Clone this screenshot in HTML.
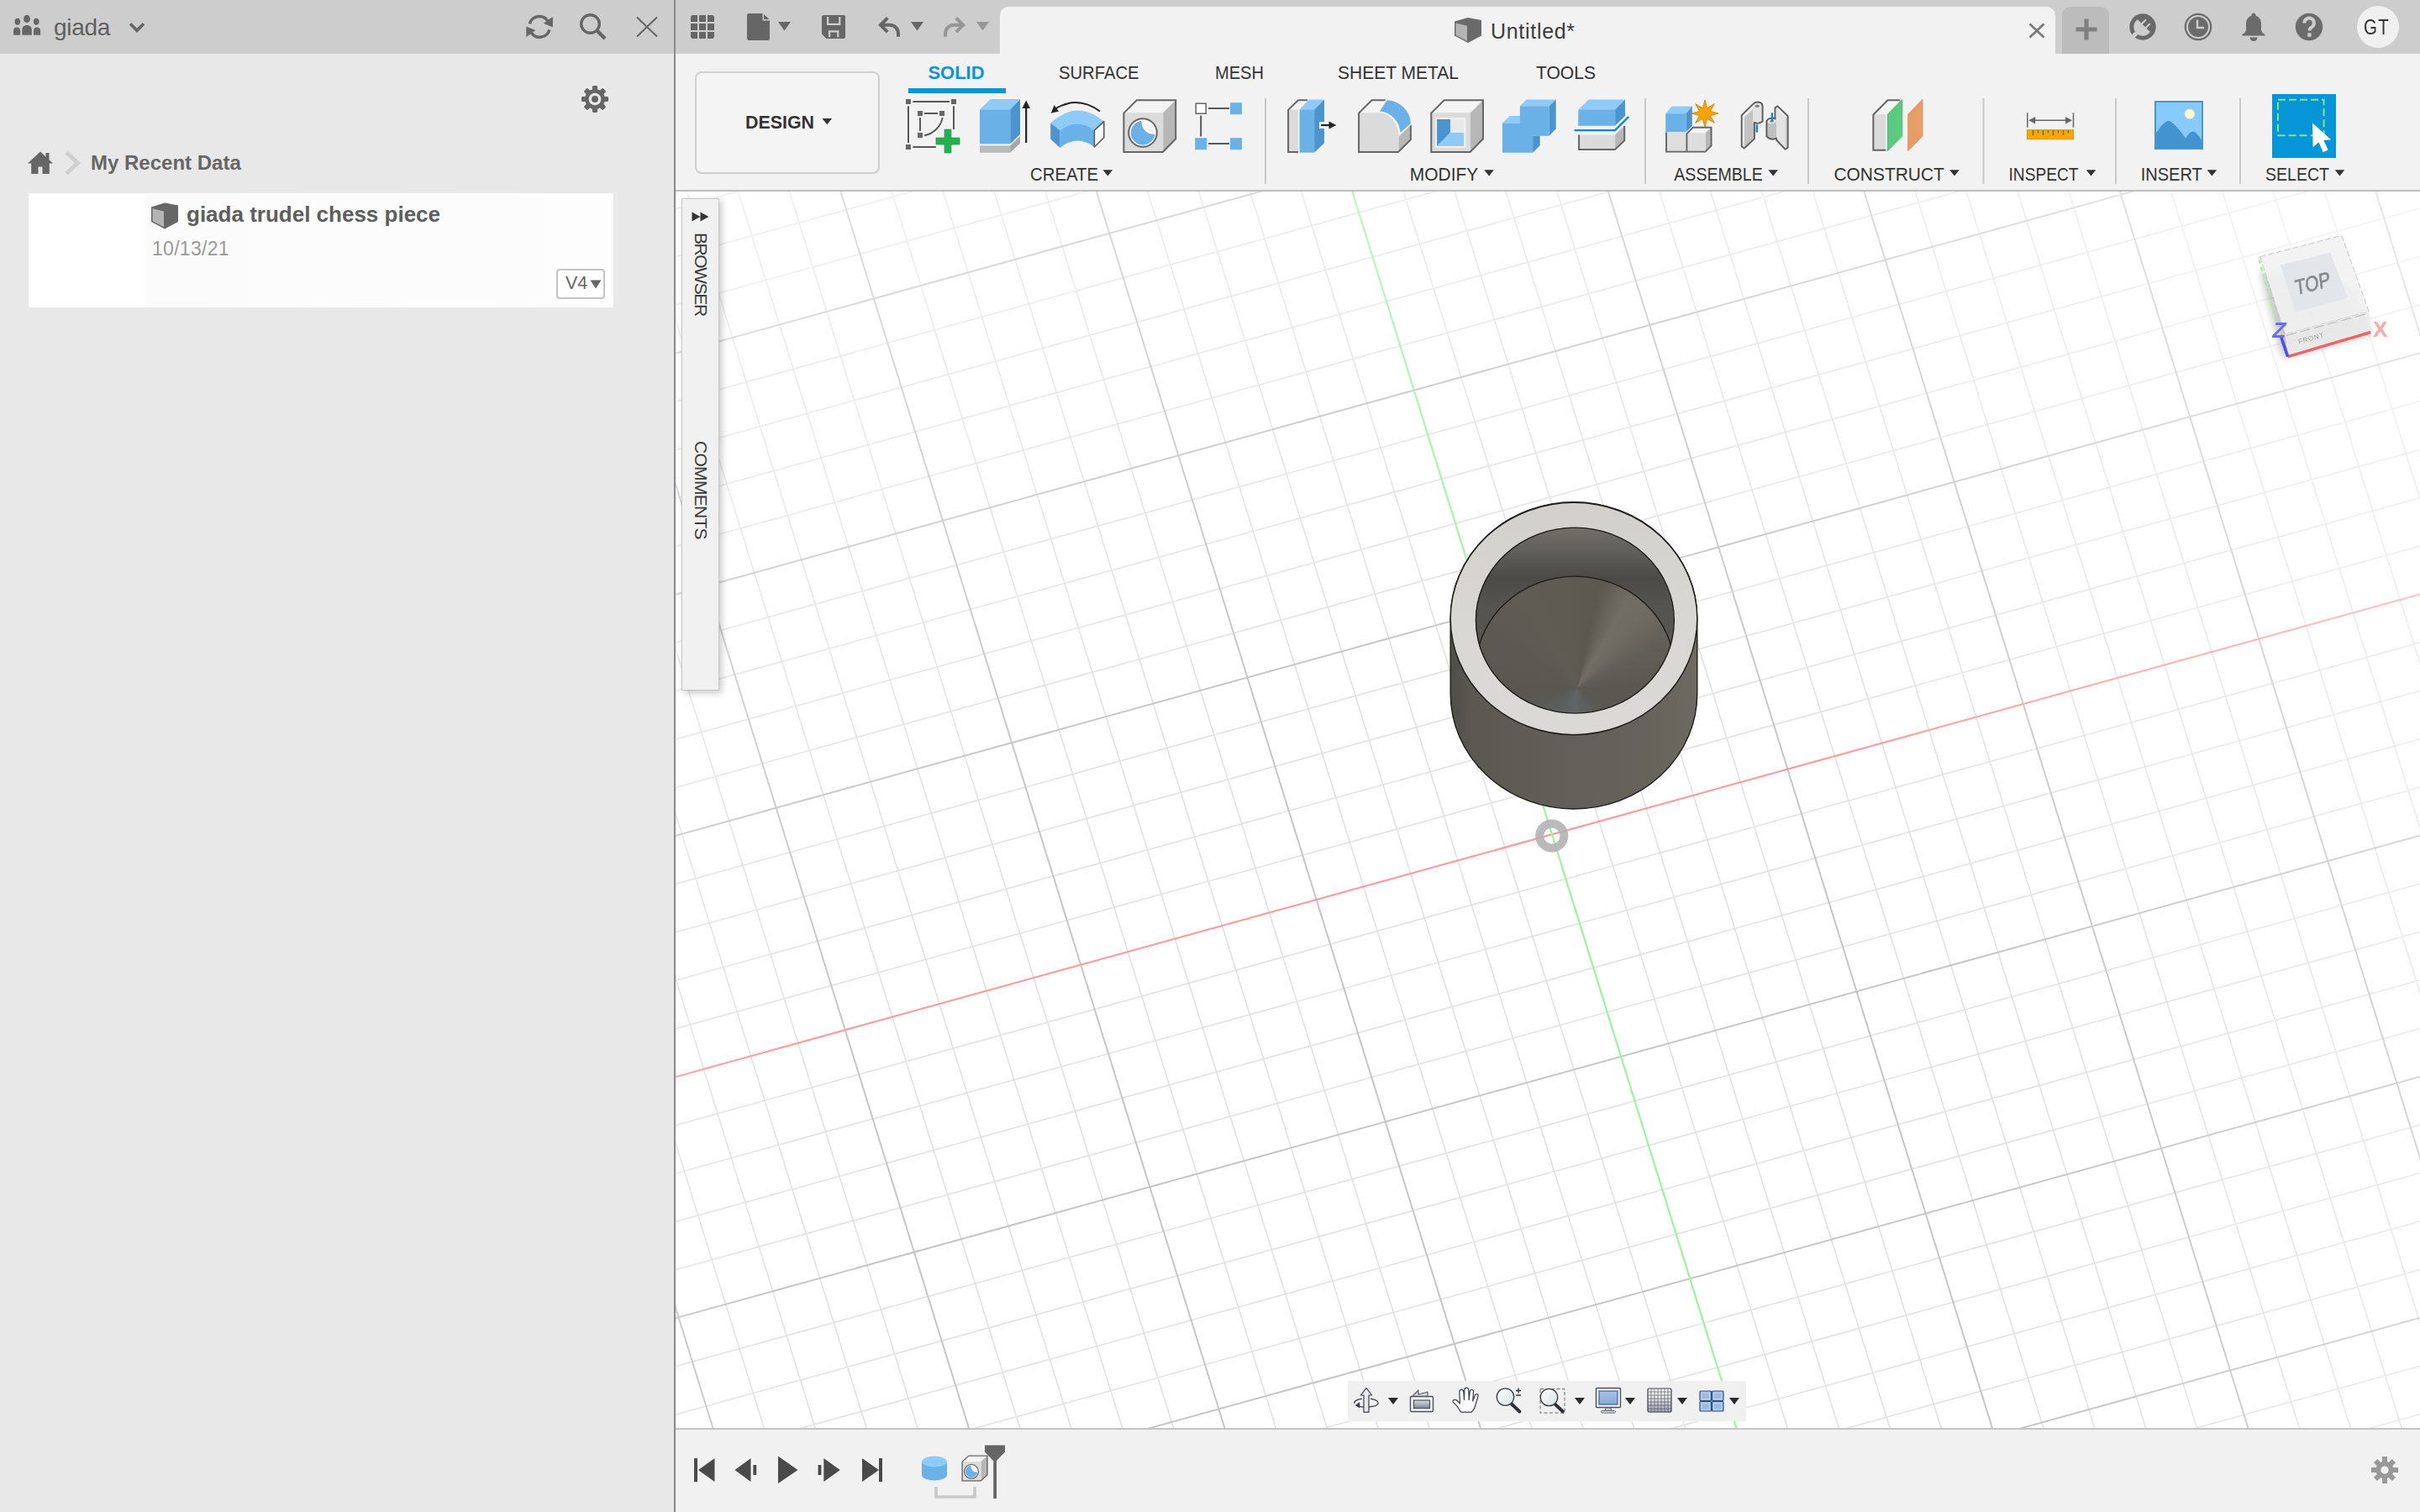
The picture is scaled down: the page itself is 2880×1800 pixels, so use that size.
<!DOCTYPE html>
<html lang="en"><head><meta charset="utf-8"><title>Fusion 360</title>
<style>
html,body{margin:0;padding:0;}
body{width:2880px;height:1800px;overflow:hidden;background:#e8e8e8;font-family:"Liberation Sans",sans-serif;position:relative;color:#333;}
.abs{position:absolute;}
svg{position:absolute;overflow:visible;}
#left{position:absolute;left:0;top:0;width:802px;height:1800px;background:#e8e8e8;}
#lefthead{position:absolute;left:0;top:0;width:802px;height:64px;background:#cdcdcd;}
#sep{position:absolute;left:802px;top:0;width:2px;height:1800px;background:#8a8a8a;}
#topbar{position:absolute;left:804px;top:0;width:2076px;height:64px;background:#cdcdcd;}
#toolbar{position:absolute;left:804px;top:64px;width:2076px;height:162px;background:#f2f2f2;border-bottom:2px solid #bebebe;}
#canvas{position:absolute;left:804px;top:228px;width:2076px;height:1472px;background:#fff;overflow:hidden;}
#bottom{position:absolute;left:804px;top:1700px;width:2076px;height:100px;background:#f1f1f1;border-top:2px solid #c3c3c3;box-sizing:border-box;}
.t{position:absolute;white-space:nowrap;line-height:1;}
</style></head><body>
<div id="left"><div id="lefthead"></div>
<!-- people icon -->
<svg style="left:15px;top:18px" width="34" height="26" viewBox="0 0 34 26"><g fill="#666">
<ellipse cx="17" cy="4.400" rx="3.950" ry="4.600"/><path d="M11.300 23.700V17.600c0-3.400 2.300-5.500 5.700-5.500s5.800 2.100 5.800 5.500v6.100z"/>
<ellipse cx="5.800" cy="7.800" rx="3.300" ry="3.950"/><path d="M1 23.700v-5.200c0-2.500 1.700-4 4-4s4.100 1.500 4.100 4v5.200z"/>
<ellipse cx="28.200" cy="7.800" rx="3.300" ry="3.950"/><path d="M25 23.700v-5.200c0-2.500 1.700-4 4-4s4.100 1.500 4.100 4v5.200z"/>
</g></svg>
<div class="t" style="left:64px;top:18.5px;font-size:28px;color:#606060;letter-spacing:-0.3px">giada</div>
<svg style="left:153px;top:26px" width="20" height="14" viewBox="0 0 20 14"><path d="M2 2.200L10 10.400L18 2.200" fill="none" stroke="#666" stroke-width="3.700"/></svg>
<!-- refresh -->
<svg style="left:624px;top:16px" width="36" height="32" viewBox="0 0 36 32"><g fill="none" stroke="#666" stroke-width="3.500">
<path d="M6.300 12.400A12 12 0 0 1 27.800 8.900"/><path d="M29.900 19.400A12 12 0 0 1 8.400 22.900"/></g>
<path d="M33.900 3.900V16.400L22.800 11.800z" fill="#666"/><path d="M2.300 27.900V15.400L13.400 20z" fill="#666"/></svg>
<!-- search -->
<svg style="left:688px;top:14px" width="36" height="36" viewBox="0 0 36 36"><circle cx="14.500" cy="14.500" r="10.800" fill="none" stroke="#666" stroke-width="3.400"/><path d="M22.500 22.500L32 32" stroke="#666" stroke-width="4.400" stroke-linecap="butt"/></svg>
<!-- close -->
<svg style="left:756px;top:19px" width="28" height="26" viewBox="0 0 28 26"><path d="M2 1.500L26 24.500M26 1.500L2 24.500" stroke="#666" stroke-width="2.100" fill="none"/></svg>
<!-- gear -->
<svg style="left:691px;top:101px" width="34" height="34" viewBox="-17 -17 34 34"><g fill="#666">
<path d="M0 -12A12 12 0 1 0 0.010 -12ZM0 -7.300A7.300 7.300 0 1 1 -0.010 -7.300Z" fill-rule="evenodd"/>
<circle r="4"/>
<g><rect x="-3.100" y="-16" width="6.200" height="6" rx="1.400"/><rect x="-3.100" y="10" width="6.200" height="6" rx="1.400"/><rect x="-16" y="-3.100" width="6" height="6.200" rx="1.400"/><rect x="10" y="-3.100" width="6" height="6.200" rx="1.400"/></g>
<g transform="rotate(45)"><rect x="-3.100" y="-16" width="6.200" height="6" rx="1.400"/><rect x="-3.100" y="10" width="6.200" height="6" rx="1.400"/><rect x="-16" y="-3.100" width="6" height="6.200" rx="1.400"/><rect x="10" y="-3.100" width="6" height="6.200" rx="1.400"/></g>
</g></svg>
<!-- breadcrumb -->
<svg style="left:32px;top:179px" width="32" height="30" viewBox="0 0 32 30"><g fill="#666"><path d="M16 1.500L1 15.500h4.200v12.500h8.300v-8.500h5v8.500h8.300v-12.500h4.200z"/><rect x="22.500" y="3" width="4" height="8"/></g></svg>
<svg style="left:76px;top:179px" width="22" height="30" viewBox="0 0 22 30"><path d="M3 2.500L16.500 15L3 27.500" fill="none" stroke="#cfcfcf" stroke-width="5"/></svg>
<div class="t" style="left:108px;top:181.5px;font-size:24px;font-weight:bold;color:#666">My Recent Data</div>
<!-- card -->
<div class="abs" style="left:34px;top:230px;width:696px;height:136px;background:linear-gradient(90deg,#fff 0,#fff 136px,#fbfbfb 140px,#fdfdfd 100%);border-radius:3px"></div>
<svg style="left:179px;top:240px" width="34" height="34" viewBox="0 0 34 34"><path d="M1 6.500L17 1.500L33 4.500V24L17 32.500L1 24Z" fill="#666"/><path d="M2.500 8.200L16 11.500V30.200L2.500 23.200Z" fill="#b4b4b4"/></svg>
<div class="t" style="left:222px;top:241.5px;font-size:26px;font-weight:bold;color:#5e5e5e">giada trudel chess piece</div>
<div class="t" style="left:181px;top:285px;font-size:23px;color:#999;letter-spacing:0.3px">10/13/21</div>
<div class="abs" style="left:662px;top:320px;width:54px;height:32px;border:2px solid #c4c4c4;border-radius:4px;background:#fff"></div>
<div class="t" style="left:673px;top:327px;font-size:21.5px;color:#666">V4</div>
<svg style="left:702px;top:333px" width="14" height="11" viewBox="0 0 14 11"><path d="M0.500 0.500h13L7 10.500z" fill="#666"/></svg>

</div>
<div id="sep"></div>
<div id="topbar">
<!-- coordinates relative to topbar (x offset 804) -->
<!-- app grid -->
<svg style="left:18px;top:18px" width="28" height="28" viewBox="0 0 28 28"><rect x="0" y="0" width="28" height="28" rx="3" fill="#666"/><path d="M9 0v28M19 0v28M0 9h28M0 19h28" stroke="#cdcdcd" stroke-width="2" fill="none"/></svg>
<!-- file -->
<svg style="left:85px;top:16px" width="27" height="32" viewBox="0 0 27 32"><path d="M2 0h16.500v8.500h8.500v21.500a2 2 0 0 1-2 2h-23a2 2 0 0 1-2-2v-28a2 2 0 0 1 2-2z" fill="#666"/><path d="M20 1l6.500 6h-6.500z" fill="#666"/></svg>
<svg style="left:122px;top:26px" width="15" height="11" viewBox="0 0 15 11"><path d="M0 0h15L7.500 10.500z" fill="#666"/></svg>
<!-- save -->
<svg style="left:174px;top:18px" width="28" height="28" viewBox="0 0 28 28"><path d="M2 0h24a2 2 0 0 1 2 2v24a2 2 0 0 1-2 2h-20.500l-5.500-5.500v-20.500a2 2 0 0 1 2-2z" fill="#666"/><path d="M7.100 2v8.800h14.200V2" fill="none" stroke="#cdcdcd" stroke-width="2.200"/><path d="M9.100 26.200v-6.800h10.200v6.800" fill="none" stroke="#cdcdcd" stroke-width="2.200"/></svg>
<!-- undo -->
<svg style="left:240px;top:19px" width="29" height="27" viewBox="0 0 29 27"><path d="M12.300 2.400L3.900 10.800L12.300 19.200" fill="none" stroke="#666" stroke-width="4"/><path d="M4.500 10.800h10.500a10 10 0 0 1 10 10v3.900" fill="none" stroke="#666" stroke-width="4"/></svg>
<svg style="left:280px;top:26px" width="15" height="11" viewBox="0 0 15 11"><path d="M0 0h15L7.500 10.500z" fill="#666"/></svg>
<!-- redo -->
<svg style="left:318px;top:19px" width="29" height="27" viewBox="0 0 29 27"><path d="M15.800 2.400L24.200 10.800L15.800 19.200" fill="none" stroke="#969696" stroke-width="4"/><path d="M23.600 10.800h-10.500a10 10 0 0 0-10 10v3.900" fill="none" stroke="#969696" stroke-width="4"/></svg>
<svg style="left:358px;top:26px" width="15" height="11" viewBox="0 0 15 11"><path d="M0 0h15L7.500 10.500z" fill="#969696"/></svg>
<!-- document tab -->
<div class="abs" style="left:386px;top:8px;width:1256px;height:56px;background:#f2f2f2;border-radius:10px 10px 0 0"></div>
<svg style="left:926px;top:20px" width="34" height="32" viewBox="0 0 34 32"><path d="M1 5.500L17 1L33 4V22.500L17 31L1 22.500Z" fill="#6a6a6a"/><path d="M2.500 7.500L16 10.800V29L2.500 21.800Z" fill="#b4b4b4"/></svg>
<div class="t" style="left:970px;top:24.5px;font-size:25px;color:#3c3c3c;letter-spacing:0.7px">Untitled*</div>
<svg style="left:1610px;top:27px" width="20" height="19" viewBox="0 0 20 19"><path d="M1.500 1.500L18.500 17.500M18.500 1.500L1.500 17.500" stroke="#7a7a7a" stroke-width="2.800" fill="none"/></svg>
<!-- plus tab -->
<div class="abs" style="left:1650px;top:8px;width:56px;height:56px;background:#bcbcbc;border-radius:9px 9px 0 0"></div>
<svg style="left:1666px;top:22px" width="26" height="26" viewBox="0 0 26 26"><path d="M13 0.500v25M0.500 13h25" stroke="#808080" stroke-width="5.200" fill="none"/></svg>
<!-- extensions (plug) -->
<svg style="left:1728.900px;top:15px" width="34" height="34" viewBox="0 0 34 34"><circle cx="17" cy="17" r="15.700" fill="#696969"/>
<path d="M10.980 8.160L25.840 23.020A10.700 10.700 0 1 1 10.980 8.160Z" fill="#cdcdcd"/>
<path d="M15.600 13.600L20.300 8.900M20.400 18.400L25.100 13.700" stroke="#cdcdcd" stroke-width="2.100" fill="none" stroke-linecap="round"/>
<path d="M15 19L4 30" stroke="#cdcdcd" stroke-width="4.900" fill="none"/></svg>
<!-- job status (clock) -->
<svg style="left:1795px;top:15px" width="34" height="34" viewBox="0 0 34 34"><circle cx="17" cy="17" r="15.200" fill="none" stroke="#6b6b6b" stroke-width="2.200"/><circle cx="17" cy="17" r="12" fill="#6b6b6b"/><path d="M16 8.500v9.500h8" stroke="#cdcdcd" stroke-width="2.400" fill="none"/></svg>
<!-- bell -->
<svg style="left:1864px;top:15px" width="28" height="34" viewBox="0 0 28 34"><g fill="#6b6b6b"><rect x="11.500" y="0.500" width="5" height="6" rx="2.500"/><path d="M14 3.500c6 0 9 4.500 9 10v6.500c0 2.500 1.500 4.500 4.500 6v1.500h-27v-1.500c3-1.500 4.500-3.500 4.500-6v-6.500c0-5.500 3-10 9-10z"/><path d="M9.500 29.500h9a4.500 4.500 0 0 1-9 0z"/></g></svg>
<!-- help -->
<svg style="left:1927px;top:15px" width="34" height="34" viewBox="0 0 34 34"><circle cx="17" cy="17" r="16.200" fill="#6b6b6b"/><path d="M11.300 12.500a5.800 5.800 0 1 1 8.800 4.900c-1.800 1.100-2.600 2-2.600 4.100" fill="none" stroke="#cdcdcd" stroke-width="4"/><rect x="15.200" y="24.300" width="4.400" height="4.400" fill="#cdcdcd"/></svg>
<!-- avatar -->
<div class="abs" style="left:2001px;top:7px;width:50px;height:50px;border-radius:25px;background:#f0f0f0"></div>
<div class="t" style="left:2008.500px;top:20px;font-size:25px;color:#333;letter-spacing:1.5px;transform:scaleX(.82);transform-origin:0 0">GT</div>

</div>
<div id="toolbar">
<div class="abs" style="left:23px;top:21px;width:216px;height:118px;border:2px solid #cfcfcf;border-radius:8px;background:#f4f4f4"></div>
<svg style="left:0;top:0" width="2076" height="162" viewBox="804 64 2076 162" font-family="Liberation Sans, sans-serif">
<defs>
<path id="dd" d="M0 0h11.600L5.800 7.200z"/>
</defs>
<g font-size="21.500" fill="#333">
<text x="887" y="153" font-weight="bold" font-size="22" textLength="82" lengthAdjust="spacingAndGlyphs">DESIGN</text>
<use href="#dd" x="978.500" y="141"/>
<text x="1104.500" y="94" font-weight="bold" fill="#0a94d6" font-size="22" textLength="67" lengthAdjust="spacingAndGlyphs">SOLID</text>
<text x="1260" y="94" font-size="22" textLength="95.500" lengthAdjust="spacingAndGlyphs">SURFACE</text>
<text x="1446" y="94" font-size="22" textLength="58" lengthAdjust="spacingAndGlyphs">MESH</text>
<text x="1592" y="94" font-size="22" textLength="144" lengthAdjust="spacingAndGlyphs">SHEET METAL</text>
<text x="1828" y="94" font-size="22" textLength="71" lengthAdjust="spacingAndGlyphs">TOOLS</text>
<text x="1226" y="214.500" textLength="81" lengthAdjust="spacingAndGlyphs">CREATE</text><use href="#dd" x="1312.500" y="202.300"/>
<text x="1677.800" y="214.500" textLength="81.500" lengthAdjust="spacingAndGlyphs">MODIFY</text><use href="#dd" x="1766.300" y="202.300"/>
<text x="1992.300" y="214.500" textLength="105.500" lengthAdjust="spacingAndGlyphs">ASSEMBLE</text><use href="#dd" x="2104.400" y="202.300"/>
<text x="2182.400" y="214.500" textLength="131.500" lengthAdjust="spacingAndGlyphs">CONSTRUCT</text><use href="#dd" x="2320.200" y="202.300"/>
<text x="2390.500" y="214.500" textLength="83" lengthAdjust="spacingAndGlyphs">INSPECT</text><use href="#dd" x="2482.700" y="202.300"/>
<text x="2547.700" y="214.500" textLength="73" lengthAdjust="spacingAndGlyphs">INSERT</text><use href="#dd" x="2626.600" y="202.300"/>
<text x="2696" y="214.500" textLength="76" lengthAdjust="spacingAndGlyphs">SELECT</text><use href="#dd" x="2778.700" y="202.300"/>
</g>
<rect x="1081" y="105" width="116" height="6" fill="#0a94d6"/>
<g fill="#c9c9c9">
<rect x="1505" y="117" width="2" height="102"/><rect x="1957" y="117" width="2" height="102"/><rect x="2151" y="117" width="2" height="102"/><rect x="2359.500" y="117" width="2" height="102"/><rect x="2517" y="117" width="2" height="102"/><rect x="2665" y="117" width="2" height="102"/>
</g>
<!-- 1: create sketch -->
<g>
<g fill="none" stroke="#585858" stroke-width="2">
<path d="M1086.400 121h43.600M1081 126.200v43.700M1135 126.200v27.700M1086.400 175h27.500"/>
<path d="M1100 135h16M1095 140v16"/>
<path d="M1121.700 140.100A27.200 27.200 0 0 1 1100.100 161.300"/>
</g>
<g fill="#666">
<rect x="1078" y="118" width="6" height="6"/><rect x="1132" y="118" width="6" height="6"/><rect x="1078" y="172" width="6" height="6"/>
<rect x="1092" y="132" width="6" height="6"/><rect x="1118" y="132" width="6" height="6"/><rect x="1092" y="158" width="6" height="6"/>
</g>
<path d="M1124.100 154.100h7.800v10h10.100v7.800h-10.100v10.100h-7.800v-10.100h-10.100v-7.800h10.100z" fill="#27b050" stroke="#1f9c46" stroke-width="0.800"/>
</g>
<!-- 2: extrude -->
<g>
<path d="M1166 130.400L1178.800 118H1214L1202.200 130.400Z" fill="#8ecbf8"/>
<path d="M1202.200 130.400L1214 118V160L1202.200 171.300Z" fill="#4a95d0"/>
<rect x="1166" y="130.400" width="36.200" height="40.900" fill="#69b1e6"/>
<rect x="1166" y="173.400" width="36.200" height="8.400" fill="#b9b9b9"/>
<path d="M1202.200 173.400L1214 162V170.400L1202.200 181.800Z" fill="#a6a6a6"/>
<path d="M1221.200 124v46" stroke="#222" stroke-width="2.200"/><path d="M1221.200 119.500l4.800 9.500h-9.600z" fill="#222"/>
</g>
<!-- 3: revolve -->
<g>
<path d="M1250.200 146.600Q1281.500 117.500 1313.800 144.600L1302.400 155.200Q1281.500 139.500 1261.600 155.200Z" fill="#8ecbf8"/>
<path d="M1250.200 146.600L1261.600 155.200V176L1250.200 165.600Z" fill="#4a95d0"/>
<path d="M1261.600 155.200Q1281.500 139.500 1302.400 155.200V175Q1281.500 159.500 1261.600 176Z" fill="#69b1e6"/>
<path d="M1302.400 155.200L1313.800 144.600V163.700L1302.400 175Z" fill="#fff" stroke="#5a5a5a" stroke-width="1.6" stroke-linejoin="round"/>
<path d="M1309 132.500Q1282 113 1255 130" fill="none" stroke="#222" stroke-width="2"/><path d="M1250.800 134.800l9.300-2.200l-5.600-7.400z" fill="#222"/>
</g>
<!-- 4: hole -->
<g>
<path d="M1336.600 134.200L1352.400 118.400H1400L1384.200 134.200Z" fill="#f4f4f4"/>
<path d="M1384.200 134.200L1400 118.400V165.600L1384.200 181.700Z" fill="#b7b7b7"/>
<rect x="1336.600" y="134.200" width="47.600" height="47.500" fill="#dbdbdb"/>
<path d="M1337.400 134.600L1352.800 119.200H1399.200V165.300L1383.800 180.900H1337.400Z" fill="none" stroke="#666" stroke-width="2" stroke-linejoin="miter"/>
<circle cx="1360" cy="158" r="16.800" fill="#f7f7f7" stroke="#666" stroke-width="2"/>
</g>
<path d="M1358 144.300A14 14 0 1 0 1374 160.500A15.500 15.500 0 0 1 1358 144.300Z" fill="#69b1e6" stroke="#5aa3dc" stroke-width="0.800"/>
<!-- 5: pattern -->
<g>
<path d="M1438 129h25M1429.200 137.500v25M1438 171h25" stroke="#585858" stroke-width="2" fill="none"/>
<rect x="1423.200" y="123.200" width="12" height="12" fill="#fff" stroke="#666" stroke-width="1.5"/>
<rect x="1464" y="122.200" width="14" height="14" fill="#69b1e6"/><rect x="1422.200" y="164.200" width="14" height="14" fill="#69b1e6"/><rect x="1464" y="164.200" width="14" height="14" fill="#69b1e6"/>
</g>
<!-- 6: press pull -->
<g>
<path d="M1532.300 130.400L1544.700 118.400H1556L1544.100 130.400Z" fill="#f4f4f4"/>
<rect x="1532.300" y="130.400" width="12.700" height="51.300" fill="#dbdbdb"/>
<path d="M1545 180.900H1533.100V130.800L1545 119.200H1556" fill="none" stroke="#666" stroke-width="2"/>
<path d="M1546.600 130.400L1557.500 118.400H1576L1564.100 130.400Z" fill="#8ecbf8"/>
<path d="M1564.100 130.400L1576 118.400V170.300L1564.100 181.700Z" fill="#4a95d0"/>
<rect x="1546.600" y="130.400" width="17.500" height="51.300" fill="#69b1e6"/>
<rect x="1570" y="145" width="12" height="8" fill="#f4f4f4"/>
<path d="M1572 149h12" stroke="#222" stroke-width="2.200"/><path d="M1590.500 149l-9-4.600v9.200z" fill="#222"/>
</g>
<!-- 7: fillet -->
<g>
<path d="M1616.300 134.200L1632.100 118.400H1650.200L1640.700 134.200Z" fill="#f4f4f4"/>
<path d="M1664.400 162.700L1679.700 148V166.500L1664.400 181.700Z" fill="#b7b7b7"/>
<path d="M1616.300 134.200H1640.700A24 28 0 0 1 1664.400 162.700V181.700H1616.300Z" fill="#dbdbdb"/>
<path d="M1650.200 119.200H1632.500L1617.100 134.600V180.900H1664L1678.900 166.200V148" fill="none" stroke="#666" stroke-width="2"/>
<path d="M1650.200 118.400A30 30 0 0 1 1679.700 147.500L1665.800 159.500A26 27 0 0 0 1640.700 133Z" fill="#69b1e6" stroke="#f4f4f4" stroke-width="1.600" stroke-linejoin="round"/>
</g>
<!-- 8: shell -->
<g>
<path d="M1702.500 134.200L1718.300 118.400H1765.800L1750 134.200Z" fill="#f4f4f4"/>
<path d="M1750 134.200L1765.800 118.400V165.600L1750 181.700Z" fill="#b7b7b7"/>
<rect x="1702.500" y="134.200" width="47.500" height="47.500" fill="#dbdbdb"/>
<path d="M1703.300 134.600L1718.700 119.200H1765V165.300L1749.600 180.900H1703.300Z" fill="none" stroke="#666" stroke-width="2"/>
<rect x="1708.200" y="139.900" width="36.100" height="36.100" fill="#f1f1f1"/>
<rect x="1710.100" y="142" width="32" height="32" fill="#e9e9e9"/>
<path d="M1710.100 142H1726V158L1710.100 174Z" fill="#4a95d0"/>
<path d="M1726 158H1742.100V174H1710.100Z" fill="#8ecbf8"/>
</g>
<!-- 9: combine -->
<g>
<path d="M1808.900 126.200L1816.500 118.400H1851.700L1843.700 126.200Z" fill="#8ecbf8"/>
<path d="M1843.700 126.200L1851.700 118.400V153.200L1843.700 161.800Z" fill="#4a95d0"/>
<path d="M1788 146.600L1796.600 138H1809V146.600Z" fill="#8ecbf8"/>
<path d="M1808.900 126.200H1843.700V161.800H1824.100V181.700H1788V146.600H1808.900Z" fill="#69b1e6"/>
<path d="M1824.100 161.800H1832.700V173.200L1824.100 181.700Z" fill="#4a95d0"/>
</g>
<!-- 10: offset/split -->
<g>
<path d="M1878.300 130.400L1890.700 118.400H1934L1922.100 130.400Z" fill="#8ecbf8"/>
<path d="M1922.100 130.400L1934 118.400V138L1922.100 149.800Z" fill="#4a95d0"/>
<rect x="1878.300" y="130.400" width="43.800" height="19.400" fill="#69b1e6"/>
<path d="M1922.100 160.500L1934 149V167.500L1922.100 178.900Z" fill="#b7b7b7"/>
<path d="M1878.300 160.500V178.900H1922.100V160.500" fill="#dbdbdb"/>
<path d="M1879.100 160.500V178.100H1921.800L1933.200 167.200V150" fill="none" stroke="#666" stroke-width="2"/>
<path d="M1873.600 155.100H1922.100L1938.200 139" fill="none" stroke="#f4f4f4" stroke-width="6"/>
<path d="M1873.600 155.100H1922.100L1938.200 139" fill="none" stroke="#0a84e0" stroke-width="2.400"/>
</g>
<!-- 11: new component -->
<g>
<path d="M1982.200 135.200L1989.800 126.600H2013.800L2006.500 135.200Z" fill="#8ecbf8"/>
<path d="M2006.500 135.200L2013.800 126.600V150L2006.500 157Z" fill="#4a95d0"/>
<rect x="1982.200" y="135.200" width="24.300" height="22" fill="#69b1e6"/>
<g>
<path d="M2007.500 158L2014.500 151H2037.300L2029.700 158Z" fill="#f4f4f4"/>
<path d="M2029.700 158L2037.300 151V173.800L2029.700 181.400Z" fill="#b7b7b7"/>
<path d="M1982.200 158V181.400H2029.700V158Z" fill="#dedede"/>
<path d="M1983 157.600V180.600H2029.400L2036.500 173.500V151.800H2014.800L2007.400 159.200V180.600" fill="none" stroke="#666" stroke-width="1.900"/>
</g>
<path d="M2029 119l2.600 9.700l8.700-5l-5 8.700l9.700 2.600l-9.700 2.600l5 8.700l-8.700-5l-2.600 9.700l-2.600-9.700l-8.700 5l5-8.700l-9.700-2.600l9.700-2.600l-5-8.700l8.700 5z" fill="#f5a20a" stroke="#db8c00" stroke-width="1"/>
</g>
<!-- 12: joint -->
<g>
<path d="M2075.700 139.400L2086.100 130.100V145.700H2087.900V165.100L2075.700 176.600Z" fill="#c2c2c2"/>
<path d="M2072.700 137.200L2075.700 139.400V176.600L2072.700 174Z" fill="#ebebeb"/>
<path d="M2086.100 125V144.600Q2092 148.800 2097.600 144.600V126Q2096 121.400 2091.500 121.600Q2087.500 121.800 2086.100 125Z" fill="#e2e2e2"/>
<path d="M2072.700 137.200L2086.100 124.100Q2088.500 121.400 2092 121.500Q2097 121.800 2097.600 126V144.600Q2092.500 148.500 2087.900 145.700V165.100L2075.700 176.600L2072.700 174Z" fill="none" stroke="#5c5c5c" stroke-width="1.900" stroke-linejoin="round"/>
<ellipse cx="2091.200" cy="126.300" rx="2.700" ry="1.500" fill="#7c7c7c"/>
<path d="M2114 128.600L2124.400 139.800V177.700L2114 166.500Z" fill="#e4e4e4"/>
<path d="M2124.400 139.800L2127.700 138.300V175.800L2124.400 177.700Z" fill="#cfcfcf"/>
<path d="M2102.400 144V162.500Q2108 167.800 2114 164.500V141Q2108 138 2102.400 144Z" fill="#bfbfbf"/>
<ellipse cx="2108.200" cy="143.900" rx="5.400" ry="3.100" fill="#efefef"/>
<ellipse cx="2108.600" cy="144.300" rx="2.600" ry="1.400" fill="#8a8a8a"/>
<path d="M2112.500 128.200L2115.500 126.400L2127.700 138.300V175.800L2124.400 177.700L2114 166.500V164.500Q2108 167.800 2102.400 162.500V144Q2104.500 140.600 2108.200 140.600Q2111 140.400 2112.500 141.500Z" fill="none" stroke="#5c5c5c" stroke-width="1.900" stroke-linejoin="round"/>
<path d="M2090.900 148.300v9.300M2108.900 134.200v10.800" stroke="#0a84e0" stroke-width="2.400" fill="none"/>
</g>
<!-- 13: construct -->
<g>
<path d="M2228.600 136.100L2246.100 118.400H2261.300L2244.200 136.100Z" fill="#f4f4f4"/>
<rect x="2228.600" y="136.100" width="15.600" height="43.400" fill="#dbdbdb"/>
<path d="M2244.200 178.700H2229.400V136.500L2246.500 119.200H2261" fill="none" stroke="#666" stroke-width="2"/>
<path d="M2246.500 136.100L2263.800 118.400V161.800L2246.500 179.500Z" fill="#5cc980" stroke="#4fb872" stroke-width="1"/>
<path d="M2270.800 136.100L2287.900 118.400V161.800L2270.800 179.500Z" fill="#e99d66" stroke="#d98f5a" stroke-width="1"/>
</g>
<!-- 14: measure -->
<g>
<path d="M2412.800 134.200v17.500M2467.500 134.200v17.500M2417 143.200h46" stroke="#666" stroke-width="1.5" fill="none"/>
<path d="M2414.200 143.200l8-4.200v8.400zM2466.100 143.200l-8-4.200v8.400z" fill="#666"/>
<rect x="2412.400" y="154.700" width="55.200" height="11" fill="#f6a800" stroke="#df9700" stroke-width="1"/>
<path d="M2419.500 155v6M2425.500 155v3.500M2431.500 155v6M2437.500 155v3.500M2443.500 155v6M2449.500 155v3.500M2455.500 155v6M2461.500 155v3.500" stroke="#7a6a3a" stroke-width="1.500"/>
</g>
<!-- 15: insert image -->
<g>
<rect x="2565" y="121" width="56" height="56" fill="#86cbfb" stroke="#4a95d0" stroke-width="2"/>
<path d="M2566 158.500Q2577 141 2583 144.500Q2590 149 2601 164.500Q2608 153.500 2612.500 157.500Q2617 161.500 2620 166.500V176H2566Z" fill="#4393cf"/>
<circle cx="2605.900" cy="135.700" r="6.200" fill="#ffffcc" stroke="#a6d2ec" stroke-width="1"/>
</g>
<!-- 16: select -->
<g>
<rect x="2704" y="112" width="76" height="76" fill="#0696d7"/>
<rect x="2711" y="118.800" width="54.600" height="42.400" fill="none" stroke="#7cec7c" stroke-width="2" stroke-dasharray="9 4"/>
<path d="M2752 146.200L2752.600 175.200L2759.500 169.300L2764.600 181.200L2770.600 178.600L2765.400 167L2774 166.300Z" fill="#fff"/>
</g>

</svg>

</div>
<div id="canvas">
<svg width="2076" height="1472" viewBox="0 0 2076 1472" style="left:0;top:0">
<defs><filter id="gblur" x="0" y="0" width="100%" height="100%" filterUnits="objectBoundingBox"><feGaussianBlur stdDeviation="0.5"/></filter></defs><g filter="url(#gblur)"><path d="M-5.0 1116.7L106.9 1477.0M-5.0 920.6L167.8 1477.0M-5.0 724.5L228.7 1477.0M-5.0 528.3L289.6 1477.0M-5.0 136.1L411.4 1477.0M12.1 -5.0L472.3 1477.0M73.0 -5.0L533.2 1477.0M133.9 -5.0L594.1 1477.0M255.7 -5.0L715.9 1477.0M316.6 -5.0L776.8 1477.0M377.5 -5.0L837.7 1477.0M438.4 -5.0L898.6 1477.0M560.2 -5.0L1020.4 1477.0M621.1 -5.0L1081.3 1477.0M682.0 -5.0L1142.2 1477.0M742.9 -5.0L1203.1 1477.0M864.7 -5.0L1324.9 1477.0M925.6 -5.0L1385.8 1477.0M986.5 -5.0L1446.7 1477.0M1047.4 -5.0L1507.6 1477.0M1169.2 -5.0L1629.4 1477.0M1230.1 -5.0L1690.3 1477.0M1291.0 -5.0L1751.2 1477.0M1351.9 -5.0L1812.1 1477.0M1473.7 -5.0L1933.9 1477.0M1534.6 -5.0L1994.8 1477.0M1595.5 -5.0L2055.7 1477.0M1656.4 -5.0L2081.0 1362.5M1778.2 -5.0L2081.0 970.3M1839.1 -5.0L2081.0 774.1M1900.0 -5.0L2081.0 578.0M1960.9 -5.0L2081.0 381.9M-5.0 21.8L91.8 -5.0M-5.0 79.2L299.3 -5.0M-5.0 136.6L506.8 -5.0M-5.0 251.5L921.8 -5.0M-5.0 308.9L1129.3 -5.0M-5.0 366.3L1336.8 -5.0M-5.0 423.8L1544.3 -5.0M-5.0 538.6L1959.3 -5.0M-5.0 596.0L2081.0 18.7M-5.0 653.5L2081.0 76.2M-5.0 710.9L2081.0 133.6M-5.0 825.7L2081.0 248.4M-5.0 883.2L2081.0 305.9M-5.0 940.6L2081.0 363.3M-5.0 998.0L2081.0 420.7M-5.0 1112.9L2081.0 535.6M-5.0 1170.3L2081.0 593.0M-5.0 1227.7L2081.0 650.4M-5.0 1285.1L2081.0 707.8M-5.0 1400.0L2081.0 822.7M-5.0 1457.4L2081.0 880.1M131.7 1477.0L2081.0 937.5M339.2 1477.0L2081.0 995.0M754.2 1477.0L2081.0 1109.8M961.7 1477.0L2081.0 1167.2M1169.2 1477.0L2081.0 1224.7M1376.7 1477.0L2081.0 1282.1M1791.7 1477.0L2081.0 1396.9M1999.1 1477.0L2081.0 1454.3" stroke="#e2e2e2" stroke-width="1.6" fill="none"/>
<path d="M-5.0 1312.8L46.0 1477.0M-5.0 332.2L350.5 1477.0M194.8 -5.0L655.0 1477.0M499.3 -5.0L959.5 1477.0M1108.3 -5.0L1568.5 1477.0M1412.8 -5.0L1873.0 1477.0M1717.3 -5.0L2081.0 1166.4M2021.8 -5.0L2081.0 185.8M-5.0 194.1L714.3 -5.0M-5.0 481.2L1751.8 -5.0M-5.0 768.3L2081.0 191.0M-5.0 1342.6L2081.0 765.3M546.7 1477.0L2081.0 1052.4M1584.2 1477.0L2081.0 1339.5" stroke="#c6c6c6" stroke-width="2" fill="none"/>
<path d="M-5.0 1055.4L2081.0 478.1" stroke="#f5a0a0" stroke-width="2.2" fill="none"/>
<path d="M803.8 -5.0L1264.0 1477.0" stroke="#9cf59c" stroke-width="2.2" fill="none"/></g>
<defs><radialGradient id="gfade" cx="1700" cy="1500" r="1750" gradientUnits="userSpaceOnUse" gradientTransform="translate(-804 -228)"><stop offset="0" stop-color="#fff" stop-opacity="0"/><stop offset="0.42" stop-color="#fff" stop-opacity="0"/><stop offset="1" stop-color="#fff" stop-opacity="0.62"/></radialGradient></defs><rect x="0" y="0" width="2076" height="1472" fill="url(#gfade)"/>
<g transform="translate(-804 -228)">
<defs>
<linearGradient id="gbody" x1="1726" y1="0" x2="2020" y2="0" gradientUnits="userSpaceOnUse">
<stop offset="0" stop-color="#4f4d47"/><stop offset="0.080" stop-color="#5a5851"/><stop offset="0.450" stop-color="#615f58"/><stop offset="0.800" stop-color="#66635b"/><stop offset="1" stop-color="#6d6a62"/>
</linearGradient>
<linearGradient id="grim" x1="0" y1="598" x2="0" y2="875" gradientUnits="userSpaceOnUse">
<stop offset="0" stop-color="#d2d0ca"/><stop offset="0.500" stop-color="#d9d7d2"/><stop offset="1" stop-color="#dbd9d5"/>
</linearGradient>
</defs>
<!-- origin marker -->
<circle cx="1846.800" cy="995" r="14.600" fill="none" stroke="#b2b2b2" stroke-opacity="0.900" stroke-width="10"/>
<!-- body -->
<path d="M1726.200 736V825.800A146.800 137.200 0 0 0 2019.800 825.800V736A146.800 138.200 0 0 0 1726.200 736Z" fill="url(#gbody)" stroke="#1d1d1b" stroke-width="1.400"/>
<!-- top rim -->
<ellipse cx="1873" cy="736.500" rx="146.800" ry="138.200" fill="url(#grim)" stroke="#1d1d1b" stroke-width="1.400"/>
</g>

</svg>
<!-- hole: inner wall + floor (coords relative to canvas: abs-804, abs-228) -->
<div class="abs" style="left:952.400px;top:400.100px;width:236px;height:221px;border-radius:50%;overflow:hidden;background:linear-gradient(180deg,#716f68 0,#605e58 14%,#4c4a45 27%,#55534d 40%,#5c5a54 100%)">
<div class="abs" style="left:0;top:58px;width:236px;height:221px;border-radius:50%;background:conic-gradient(from 0deg at 120.900px 132.500px,#5d5a52 0deg,#5b5850 12deg,#726e65 30deg,#6e6a61 44deg,#625f58 62deg,#5b5852 90deg,#5a5852 130deg,#5e6162 165deg,#5f6667 185deg,#5a5f5f 225deg,#59574f 262deg,#5c5952 300deg,#5f5c54 330deg,#5d5a52 360deg)"></div>
</div>
<svg width="2076" height="1472" viewBox="804 228 2076 1472" style="left:0;top:0">
<defs><clipPath id="cphole"><ellipse cx="1874.400" cy="738.600" rx="118" ry="110.500"/></clipPath></defs>
<ellipse cx="1874.400" cy="796.600" rx="118" ry="110.500" fill="none" stroke="#1d1d1b" stroke-width="1.400" clip-path="url(#cphole)"/>
<ellipse cx="1874.400" cy="738.600" rx="118" ry="110.500" fill="none" stroke="#1d1d1b" stroke-width="1.400"/>
</svg>
<!-- browser / comments side panel -->
<div class="abs" style="left:7px;top:8px;width:45px;height:586px;background:#f1f1f1;border:1.500px solid #c6c6c6;box-sizing:border-box;box-shadow:3px 3px 8px rgba(0,0,0,0.220)"></div>
<svg style="left:19px;top:23px" width="22" height="14" viewBox="0 0 22 14"><path d="M0.500 1.500v11l10-5.500zM10.500 1.500v11l10-5.500z" fill="#333"/></svg>
<div class="t" style="left:40.500px;top:49px;font-size:21px;color:#3a3a3a;transform:rotate(90deg);transform-origin:0 0;letter-spacing:-1.400px">BROWSER</div>
<div class="t" style="left:40.500px;top:297px;font-size:21px;color:#3a3a3a;transform:rotate(90deg);transform-origin:0 0;letter-spacing:-0.700px">COMMENTS</div>
<!-- view cube (abs coords via viewBox) -->
<svg width="2076" height="1472" viewBox="804 228 2076 1472" style="left:0;top:0" font-family="Liberation Sans, sans-serif">
<defs><filter id="vcblur" x="-30%" y="-30%" width="160%" height="160%"><feGaussianBlur stdDeviation="5"/></filter>
<filter id="vcsoft" x="-10%" y="-10%" width="120%" height="120%"><feGaussianBlur stdDeviation="0.700"/></filter></defs>
<path d="M2690 322L2716 426L2822 398L2800 340Z" fill="#000" opacity="0.220" filter="url(#vcblur)"/>
<g filter="url(#vcsoft)">
<path d="M2689.600 305.600L2786.800 280.400L2819.200 371L2719.400 398Z" fill="#f2f2f2" fill-opacity="0.900" stroke="#c4c4c4" stroke-width="1" stroke-dasharray="7 3"/>
<path d="M2719.400 398L2819.200 371L2821.200 395.500L2722.700 424.600Z" fill="#eaeaea" fill-opacity="0.920"/>
<path d="M2714 315.500L2773 300.500L2794 354.500L2732 372Z" fill="#e2e5ea"/>
<path d="M2721 399.500L2818.500 373" stroke="#bdbdbd" stroke-width="1.200" stroke-dasharray="12 5" fill="none"/>
<text transform="translate(2732.500 351.500) rotate(-15) skewX(-8)" font-size="25" fill="#878a90" stroke="#878a90" stroke-width="0.700" textLength="43" lengthAdjust="spacingAndGlyphs">TOP</text>
<text transform="translate(2736 409.500) rotate(-15)" font-size="8" fill="#9a9a9a" letter-spacing="0.800">FRONT</text>
<path d="M2688.500 309L2708.500 382" stroke="#9af39a" stroke-width="2.200" stroke-dasharray="5 4" fill="none"/>
<path d="M2722.700 424.600L2821.200 395.500" stroke="#f06363" stroke-width="3.400" fill="none"/>
<path d="M2714 399L2722.700 424.600" stroke="#4a4ff0" stroke-width="3.600" fill="none"/>
<text transform="translate(2703 402) skewX(-12)" font-size="26" font-weight="bold" fill="#6a6af5">Z</text>
<text x="2824" y="401" font-size="26" font-weight="bold" fill="#f7a8a8">X</text>
</g>
</svg>
<!-- navigation bar -->
<div class="abs" style="left:800px;top:1416px;width:474px;height:48px;background:#f0f0f0"></div>
<svg width="2076" height="1472" viewBox="804 228 2076 1472" style="left:0;top:0">
<defs><path id="ndd" d="M0 0h12L6 8z" fill="#2a2a2a"/>
<linearGradient id="gmon" x1="0" y1="0" x2="0" y2="1"><stop offset="0" stop-color="#a9c3e6"/><stop offset="1" stop-color="#86a8d8"/></linearGradient>
<linearGradient id="ggrid" x1="0" y1="0" x2="0" y2="1"><stop offset="0" stop-color="#ffffff"/><stop offset="0.250" stop-color="#fafafb"/><stop offset="1" stop-color="#9ea3b0"/></linearGradient>
<linearGradient id="gglass" x1="0" y1="0" x2="1" y2="1"><stop offset="0" stop-color="#fff"/><stop offset="1" stop-color="#d2e2e2"/></linearGradient>
<linearGradient id="gfold" x1="0" y1="0" x2="0" y2="1"><stop offset="0" stop-color="#d8dbe2"/><stop offset="1" stop-color="#7d8697"/></linearGradient>
</defs>
<!-- orbit -->
<g transform="translate(1626 1668)">
<path d="M5 -2.800C12.500 -1.800 15 1.200 14 3.200C12 7.200 -6 8.400 -10.500 5.300" fill="none" stroke="#3a3f4a" stroke-width="1.300"/>
<path d="M-3 13.200V-7h-3.600l6.600-8.600l6.600 8.600h-3.600V13.200z" fill="#e8eaf0" stroke="#3a3f4a" stroke-width="1.200" stroke-linejoin="round"/>
<path d="M-5 -2.800C-12.500 -1.800 -15 0.800 -14 2.800" fill="none" stroke="#3a3f4a" stroke-width="1.300"/>
<path d="M-13.200 5l5.400-4v7.600z" fill="#3a3f4a"/>
</g>
<use href="#ndd" x="1652" y="1664"/>
<!-- look at (folder) -->
<g transform="translate(1692 1668)">
<path d="M-12 -5L-4 -13L-4 -8L7 -11V-5" fill="#cfd3da" stroke="#5a6272" stroke-width="1.200" stroke-linejoin="round"/>
<rect x="-13.500" y="-5.500" width="27" height="18" rx="1.500" fill="#f4f5f7" stroke="#4a5060" stroke-width="1.400"/>
<rect x="-9.500" y="-1" width="19" height="9.500" fill="url(#gfold)" stroke="#4a5060" stroke-width="1.200"/>
</g>
<!-- pan (hand) -->
<g transform="translate(1744 1667)" fill="#fbfbfb" stroke="#3a3f4a" stroke-width="1.200" stroke-linejoin="round" stroke-linecap="round">
<path d="M-15.100 1C-14.500 -1 -11.500 -1 -10.300 0L-6.600 3.900L-7.100 -10.100C-7.100 -13.400 -2.400 -13.400 -2.200 -10.100L-1.500 -0.500L-1.200 -12.100C-1.200 -15.800 3.800 -15.800 3.800 -12.100L4.200 -0.500L5.300 -10.600C5.600 -13.800 10 -13.300 9.500 -10.100L8.800 1L11.200 -5.700C12.200 -8.700 16 -7.500 15 -4.700C13.500 0 12.500 4 11.700 6.500C11 9 10 11 9.200 11.700L7.200 14.200H-5.200C-6.500 12.500 -7.500 11 -8.100 9.700C-9.500 7.500 -11 6 -12.100 4.700C-13.500 3.300 -15.500 2.500 -15.100 1Z"/>
</g>
<!-- zoom -->
<g transform="translate(1795 1667)">
<path d="M3.500 4L13.500 13.500" stroke="#2e3138" stroke-width="3.800" stroke-linecap="round"/>
<circle cx="-3.500" cy="-4" r="10.200" fill="url(#gglass)" stroke="#3a3f4a" stroke-width="1.300"/>
<path d="M9 -11.500h6M12 -14.500v6M9 -6h6" stroke="#2e3138" stroke-width="1.300"/>
</g>
<!-- zoom window -->
<g transform="translate(1847 1668)">
<rect x="-14" y="-14.500" width="29" height="28.500" fill="none" stroke="#666" stroke-width="1" stroke-dasharray="4 2.500"/>
<path d="M3.500 3.500L13 12.500" stroke="#2e3138" stroke-width="3.800" stroke-linecap="round"/>
<circle cx="-3.500" cy="-4.500" r="10.200" fill="url(#gglass)" stroke="#3a3f4a" stroke-width="1.300"/>
</g>
<use href="#ndd" x="1874" y="1664"/>
<!-- display (monitor) -->
<g transform="translate(1914 1667)">
<rect x="-14.500" y="-14.500" width="29" height="23" rx="1" fill="#f6f6f6" stroke="#4a5060" stroke-width="1.400"/>
<rect x="-11" y="-11" width="22" height="16" fill="url(#gmon)" stroke="#3f5f9a" stroke-width="1.200"/>
<path d="M-3 9h6l1 4h-8z" fill="#c9ccd2" stroke="#5a6272" stroke-width="1"/><rect x="-8.500" y="12.500" width="17" height="2.500" rx="1" fill="#dfe1e5" stroke="#5a6272" stroke-width="1"/>
</g>
<use href="#ndd" x="1934" y="1664"/>
<!-- grid -->
<g transform="translate(1975 1667)">
<rect x="-14" y="-14" width="28" height="28" rx="1.500" fill="url(#ggrid)" stroke="#3a3f4a" stroke-width="1.200"/>
<path d="M-10 -14v28M-6 -14v28M-2 -14v28M2 -14v28M6 -14v28M10 -14v28M-14 -10h28M-14 -6h28M-14 -2h28M-14 2h28M-14 6h28M-14 10h28" stroke="#565b67" stroke-opacity="0.800" stroke-width="0.900"/>
</g>
<use href="#ndd" x="1996" y="1664"/>
<!-- viewports -->
<g transform="translate(2037 1668)" fill="#9bb9df" stroke="#34528a" stroke-width="1.200">
<rect x="-14" y="-12" width="13.500" height="11.500" rx="1"/><rect x="0.500" y="-12" width="13.500" height="11.500" rx="1"/><rect x="-14" y="0.500" width="13.500" height="11.500" rx="1"/><rect x="0.500" y="0.500" width="13.500" height="11.500" rx="1"/>
</g>
<g transform="translate(2037 1668)" fill="none" stroke="#c4d6ee" stroke-width="1"><rect x="-12" y="-10" width="9.500" height="7.500"/><rect x="2.500" y="-10" width="9.500" height="7.500"/><rect x="-12" y="2.500" width="9.500" height="7.500"/><rect x="2.500" y="2.500" width="9.500" height="7.500"/></g>
<use href="#ndd" x="2058" y="1664"/>
</svg>

</div>
<div id="bottom">
<svg width="2076" height="100" viewBox="804 1700 2076 100" style="left:0;top:-2px">
<g fill="#4a4a4a">
<rect x="826" y="1736" width="4" height="28"/><path d="M850.500 1736v28L831 1750z"/>
<path d="M893.500 1736v28L874.500 1750z"/><rect x="896.400" y="1744" width="3.800" height="12"/>
<path d="M926 1733.500v32.500L949.500 1750z"/>
<rect x="973.600" y="1744" width="3.800" height="12"/><path d="M980.300 1736v28L999.800 1750z"/>
<path d="M1026 1736v28L1046 1750z"/><rect x="1046" y="1736" width="4" height="28"/>
</g>
<!-- cylinder feature -->
<path d="M1097 1740v16a15 6.500 0 0 0 30 0v-16z" fill="#69b1e6"/><ellipse cx="1112" cy="1740" rx="15" ry="6.500" fill="#8ecbf8"/>
<!-- hole feature -->
<g>
<path d="M1144.500 1740L1152.500 1732.500H1175.500L1167.500 1740Z" fill="#f4f4f4"/>
<path d="M1167.500 1740L1175.500 1732.500V1756L1167.500 1763.500Z" fill="#b7b7b7"/>
<rect x="1144.500" y="1740" width="23" height="23.500" fill="#dbdbdb"/>
<path d="M1145.100 1740.200L1152.800 1733.100H1174.900V1755.700L1167.200 1762.900H1145.100Z" fill="none" stroke="#666" stroke-width="1.300"/>
<circle cx="1156" cy="1751.800" r="8.400" fill="#f7f7f7" stroke="#666" stroke-width="1.300"/>
</g>
<path d="M1155 1745A6.800 6.800 0 1 0 1162.800 1753A7.500 7.500 0 0 1 1155 1745Z" fill="#69b1e6" stroke="#5aa3dc" stroke-width="0.600"/>
<!-- bracket -->
<path d="M1114 1770v12h46v-12" fill="none" stroke="#c8c8c8" stroke-width="3.600"/>
<!-- marker -->
<path d="M1172 1720.500h24v8l-10 10.500h-4l-10-10.500z" fill="#666"/><rect x="1182.200" y="1738" width="3.800" height="46" fill="#666"/>
<!-- gear -->
<g transform="translate(2838 1750)" fill="#999">
<path d="M0 -10.500A10.500 10.500 0 1 0 0.010 -10.500ZM0 -4.600A4.600 4.600 0 1 1 -0.010 -4.600Z" fill-rule="evenodd"/>
<rect x="-3" y="-16" width="6" height="7"/><rect x="-3" y="9" width="6" height="7"/><rect x="-16" y="-3" width="7" height="6"/><rect x="9" y="-3" width="7" height="6"/>
<g transform="rotate(45)"><rect x="-3" y="-15.500" width="6" height="7"/><rect x="-3" y="8.500" width="6" height="7"/><rect x="-15.500" y="-3" width="7" height="6"/><rect x="8.500" y="-3" width="7" height="6"/></g>
</g>
</svg>

</div>
</body></html>
